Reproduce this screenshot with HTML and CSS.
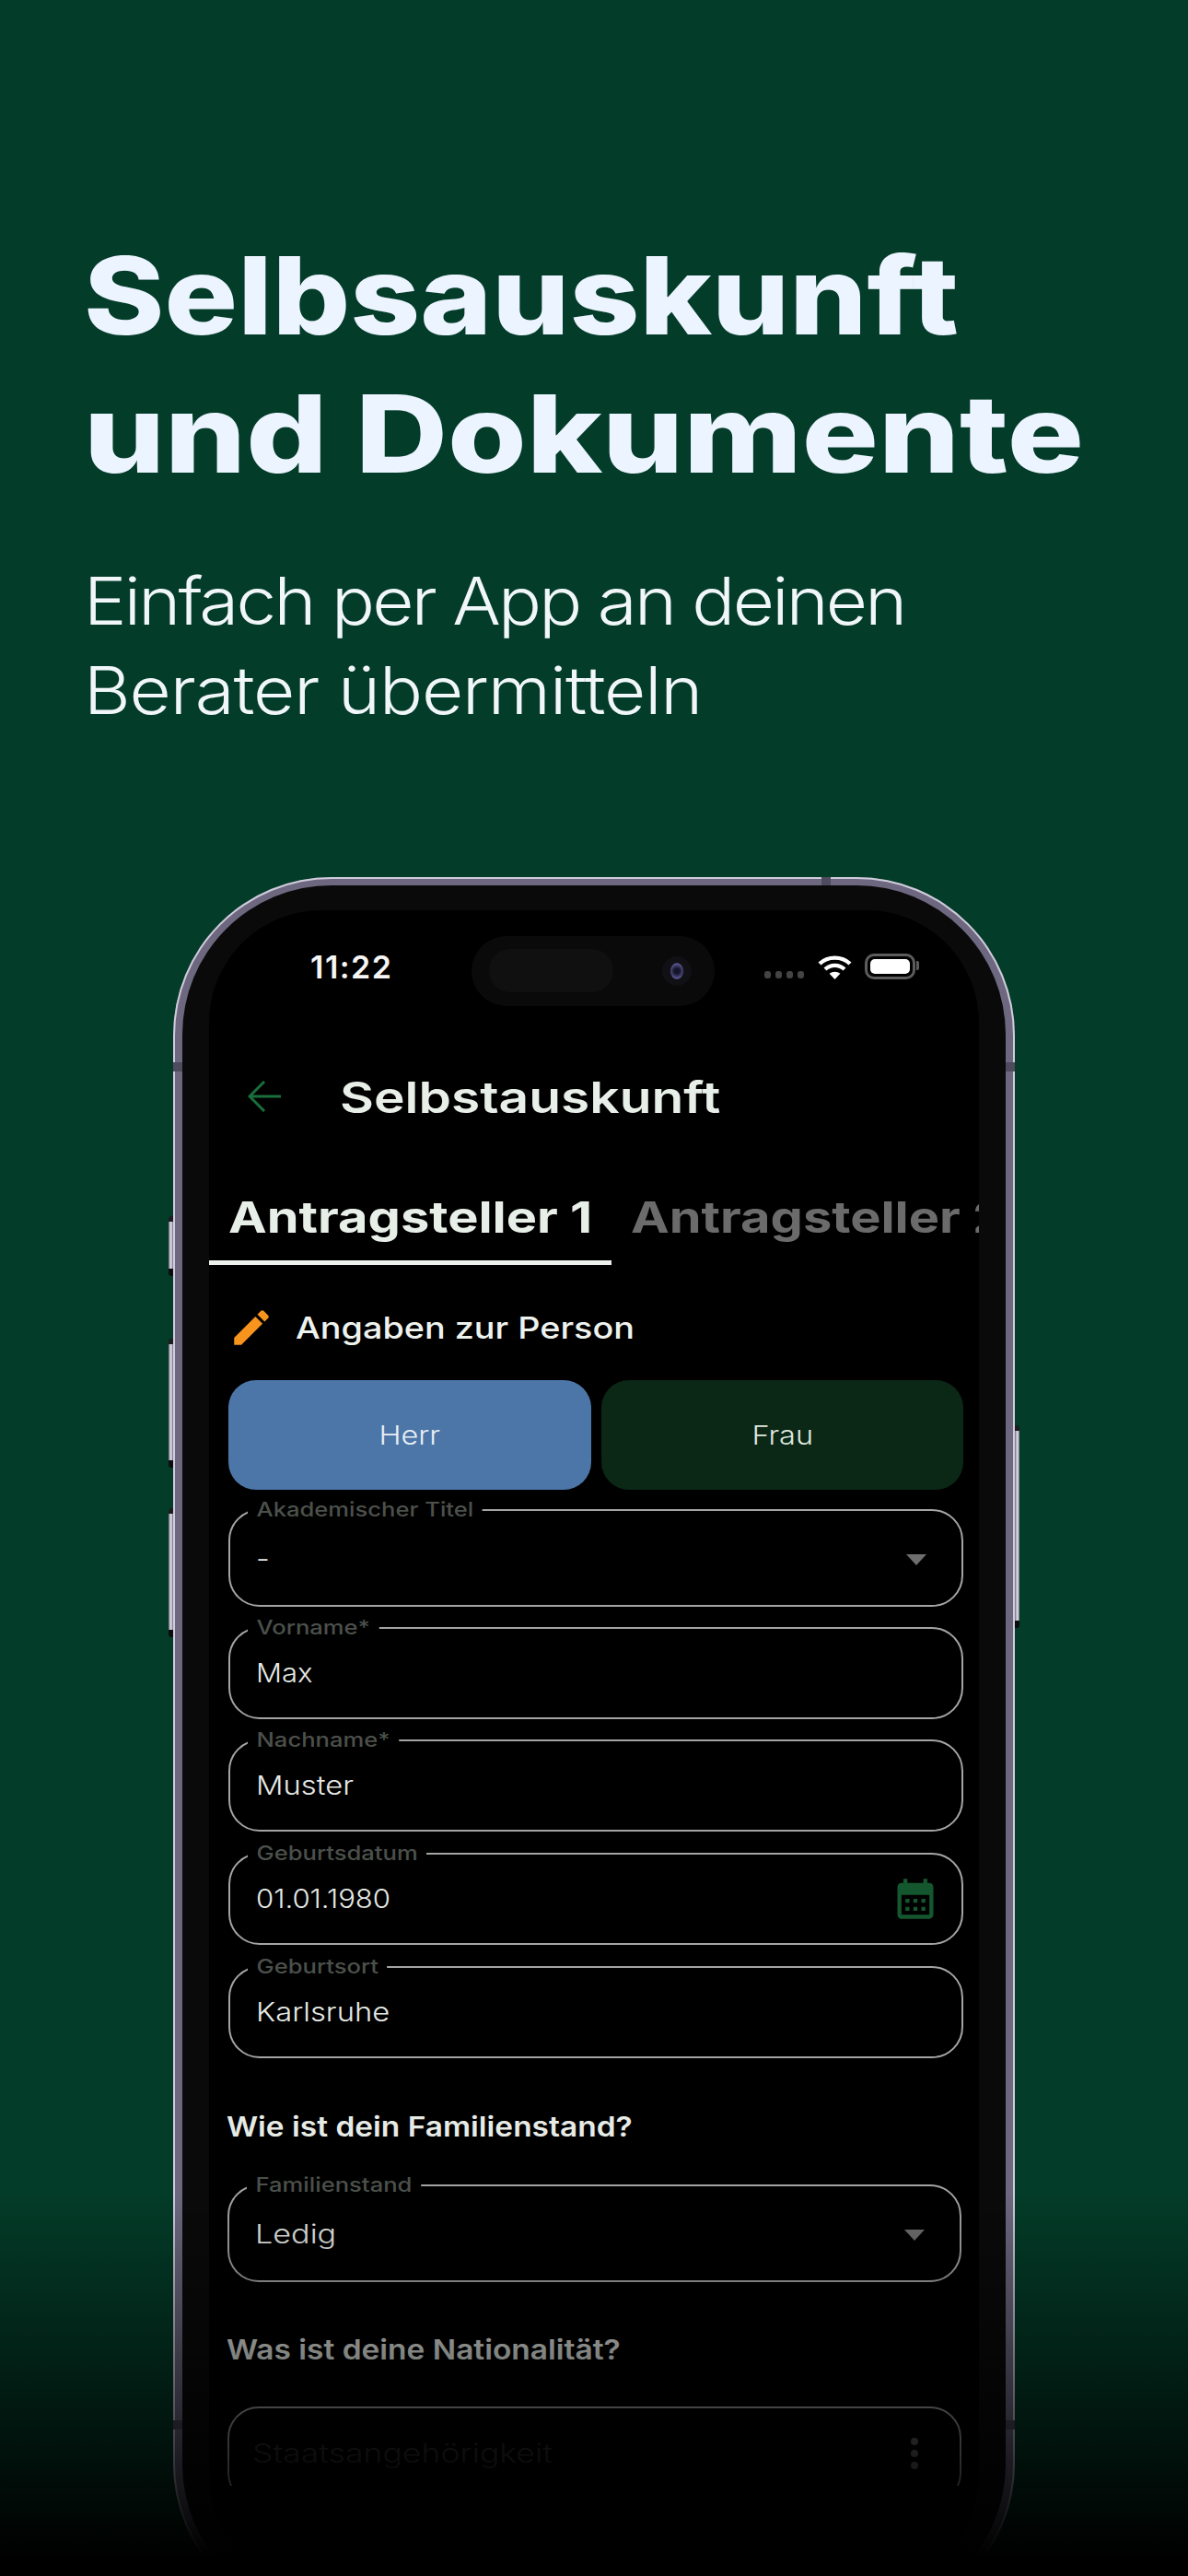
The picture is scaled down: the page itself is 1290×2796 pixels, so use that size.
FILE: index.html
```html
<!DOCTYPE html>
<html lang="de">
<head>
<meta charset="utf-8">
<title>Selbstauskunft und Dokumente</title>
<link rel="stylesheet" href="styles.css">
</head>
<body>
<main class="page">
  <header class="hero">
    <h1 class="hero-title"><span class="line t1">Selbsauskunft</span><br><span class="line t2">und Dokumente</span></h1>
    <p class="hero-sub"><span class="line s1">Einfach per App an deinen</span><br><span class="line s2">Berater übermitteln</span></p>
  </header>

  <div class="phone">
    <span class="hw btn-silent"></span>
    <span class="hw btn-up"></span>
    <span class="hw btn-down"></span>
    <span class="hw btn-power"></span>
    <span class="band band-lt"></span>
    <span class="band band-rt"></span>
    <span class="band band-lb"></span>
    <span class="band band-rb"></span>
    <span class="band band-top"></span>
    <div class="bezel">
      <div class="screen">
        <div class="island">
          <span class="island-pill"></span>
          <span class="camera"><span class="lens"></span></span>
        </div>
        <div class="status">
          <span class="time">11:22</span>
          <div class="status-icons">
            <span class="signal"><i></i><i></i><i></i><i></i></span>
            <svg class="wifi" viewBox="0 0 37 27" aria-hidden="true">
              <path d="M2 10C11 1.5 26 1.5 35 10" fill="none" stroke="#fff" stroke-width="4.4"/>
              <path d="M8 16C14 10.5 23 10.5 29 16" fill="none" stroke="#fff" stroke-width="4.4"/>
              <path d="M18.5 27L12.6 20.8C16 18 21 18 24.4 20.8Z" fill="#fff"/>
            </svg>
            <span class="battery"><span class="battery-fill"></span></span>
          </div>
        </div>

        <div class="appbar">
          <svg class="back" viewBox="0 0 36 34" aria-hidden="true">
            <path d="M36 17H3M18 1L2 17L18 33" fill="none" stroke="#1a6e3c" stroke-width="3"/>
          </svg>
          <span class="appbar-title">Selbstauskunft</span>
        </div>

        <div class="tabs">
          <div class="tab tab-active"><span class="tab-text">Antragsteller 1</span></div>
          <div class="tab tab-idle"><span class="tab-text">Antragsteller 2</span></div>
        </div>

        <div class="scroll">
          <div class="section-head">
            <svg class="pencil" viewBox="0 0 24 24" aria-hidden="true">
              <path fill="#f7941d" d="M3 17.25V21h3.75L17.81 9.94l-3.75-3.75L3 17.25zM20.71 7.04c.39-.39.39-1.02 0-1.41l-2.34-2.34c-.39-.39-1.02-.39-1.41 0l-1.83 1.83 3.75 3.75 1.83-1.83z"/>
            </svg>
            <span class="section-title">Angaben zur Person</span>
          </div>

          <div class="gender">
            <div class="gender-btn gender-on"><span class="gender-text">Herr</span></div>
            <div class="gender-btn gender-off"><span class="gender-text">Frau</span></div>
          </div>

          <div class="fields">
            <div class="field field-tall field-first">
              <span class="label">Akademischer Titel</span>
              <span class="value">-</span>
              <svg class="caret" viewBox="0 0 22 12" aria-hidden="true"><path d="M0 0H22L11 12Z" fill="#6e6e6e"/></svg>
            </div>
            <div class="field">
              <span class="label">Vorname*</span>
              <span class="value v-narrow">Max</span>
            </div>
            <div class="field">
              <span class="label">Nachname*</span>
              <span class="value">Muster</span>
            </div>
            <div class="field">
              <span class="label">Geburtsdatum</span>
              <span class="value v-narrow">01.01.1980</span>
              <svg class="calendar" viewBox="0 0 24 24" aria-hidden="true">
                <path fill="#14572f" d="M19 4h-1V2h-2v2H8V2H6v2H5c-1.11 0-1.99.9-1.99 2L3 20a2 2 0 0 0 2 2h14c1.1 0 2-.9 2-2V6c0-1.1-.9-2-2-2zm0 16H5V10h14v10zM9 14H7v-2h2v2zm4 0h-2v-2h2v2zm4 0h-2v-2h2v2zm-8 4H7v-2h2v2zm4 0h-2v-2h2v2zm4 0h-2v-2h2v2z"/>
              </svg>
            </div>
            <div class="field">
              <span class="label">Geburtsort</span>
              <span class="value">Karlsruhe</span>
            </div>
          </div>

          <h2 class="question question-first"><span class="q-text">Wie ist dein Familienstand?</span></h2>
          <div class="field field-tall field-single">
            <span class="label">Familienstand</span>
            <span class="value v-wide">Ledig</span>
            <svg class="caret" viewBox="0 0 22 12" aria-hidden="true"><path d="M0 0H22L11 12Z" fill="#6e6e6e"/></svg>
          </div>

          <h2 class="question question-second"><span class="q-text">Was ist deine Nationalität?</span></h2>
          <div class="field field-single field-empty">
            <span class="value placeholder">Staatsangehörigkeit</span>
            <span class="kebab"><i></i><i></i><i></i></span>
          </div>
        </div>
        <span class="home"></span>
      </div>
    </div>
  </div>
  <div class="fade"></div>
</main>
</body>
</html>
```

FILE: styles.css
```css
* { box-sizing: border-box; }
html, body { margin: 0; padding: 0; background: #033c28; }
body { font-family: "Inter", "Liberation Sans", sans-serif; }

.page {
  position: relative;
  width: 1290px;
  height: 2796px;
  overflow: hidden;
  background: #033c28;
}

/* Hero */
.hero { padding: 246px 0 0 91px; color: #ecf4ff; }
.hero-title {
  margin: 0;
  font-size: 117px;
  line-height: 150px;
  font-weight: 800;
  white-space: nowrap;
}
.line { display: inline-block; transform-origin: left center; }
.t1 { transform: scaleX(1.133); }
.t2 { transform: scaleX(1.185); }
.hero-sub {
  margin: 58px 0 0;
  font-size: 71px;
  line-height: 97px;
  font-weight: 300;
  white-space: nowrap;
  color: #f1f6f9;
}
.s1 { letter-spacing: -2.5px; transform: scaleX(1.1); }
.s2 { letter-spacing: -1px; transform: scaleX(1.1); }

/* Phone hardware */
.phone {
  position: relative;
  width: 914px;
  height: 1894px;
  margin: 154px 0 0 188px;
  padding: 9px 10px;
  border-radius: 172px;
  background: #6d6880;
  box-shadow: inset 0 0 0 2px #cfccdb;
}
.hw {
  position: absolute;
  width: 5px;
  background:
    linear-gradient(#1c1c20 0 6px, transparent 6px calc(100% - 8px), #0c0c0e calc(100% - 8px)),
    linear-gradient(90deg, #6f6b80, #e6e4ee 55%, #6f6b80);
}
.btn-silent { left: -5px; top: 368px; height: 65px; border-radius: 3px 0 0 3px; }
.btn-up { left: -5px; top: 501px; height: 140px; border-radius: 3px 0 0 3px; }
.btn-down { left: -5px; top: 685px; height: 140px; border-radius: 3px 0 0 3px; }
.btn-power { right: -5px; top: 595px; height: 220px; border-radius: 0 3px 3px 0; }
.band { position: absolute; background: #4f4b5e; }
.band-lt { left: 0; top: 201px; width: 10px; height: 10px; }
.band-rt { right: 0; top: 201px; width: 10px; height: 10px; }
.band-lb { left: 0; top: 1675px; width: 10px; height: 10px; }
.band-rb { right: 0; top: 1675px; width: 10px; height: 10px; }
.band-top { left: 704px; top: 0; width: 10px; height: 9px; }

.bezel {
  height: 100%;
  padding: 27px 29px;
  border-radius: 162px;
  background: #0a0a0a;
}
.screen {
  position: relative;
  height: 100%;
  overflow: hidden;
  border-radius: 122px;
  background: #000;
}

/* Status bar */
.island {
  position: absolute;
  left: 285px;
  top: 28px;
  width: 264px;
  height: 76px;
  border-radius: 38px;
  background: #0a0a0a;
}
.island-pill {
  position: absolute;
  left: 19px;
  top: 14px;
  width: 135px;
  height: 47px;
  border-radius: 24px;
  background: #101010;
}
.camera {
  position: absolute;
  left: 207px;
  top: 22px;
  width: 32px;
  height: 32px;
  border-radius: 50%;
  background: #101015;
  display: flex;
  align-items: center;
  justify-content: center;
}
.lens {
  width: 14px;
  height: 18px;
  border-radius: 50%;
  background: radial-gradient(circle, #15152a 25%, #5b5590 70%, #1a1a2a 100%);
}
.status {
  position: relative;
  display: flex;
  align-items: center;
  justify-content: space-between;
  height: 66px;
  margin-top: 28px;
  padding: 0 69px 0 110px;
}
.time {
  font-family: "Inter", sans-serif;
  font-size: 34px;
  font-weight: 600;
  letter-spacing: 1.5px;
  color: #f5f5f5;
}
.status-icons { display: flex; align-items: center; }
.signal { display: flex; gap: 5px; margin: 18px 15px 0 0; }
.signal i { width: 7px; height: 8px; border-radius: 3px; background: #444; }
.wifi { width: 37px; height: 27px; margin-right: 14px; }
.battery {
  position: relative;
  width: 55px;
  height: 28px;
  padding: 3px;
  border: 3px solid #5c5c5c;
  border-radius: 10px;
}
.battery::after {
  content: "";
  position: absolute;
  right: -7px;
  top: 5px;
  width: 3px;
  height: 10px;
  border-radius: 0 2px 2px 0;
  background: #5c5c5c;
}
.battery-fill { display: block; height: 100%; border-radius: 5px; background: #fff; }

/* App bar */
.appbar {
  display: flex;
  align-items: center;
  height: 60px;
  margin-top: 78px;
  padding-left: 42px;
}
.back { width: 36px; height: 34px; margin-right: 64px; }
.appbar-title {
  display: inline-block;
  font-size: 47px;
  font-weight: 600;
  color: #e8efe8;
  white-space: nowrap;
  transform: scaleX(1.21);
  transform-origin: left center;
}

/* Tabs */
.tabs {
  display: flex;
  align-items: flex-start;
  height: 103px;
  margin-top: 50px;
  font-size: 47px;
  font-weight: 700;
  white-space: nowrap;
}
.tab {
  flex: none;
  display: flex;
  align-items: center;
  height: 97px;
  padding-top: 3px;
}
.tab-text { display: inline-block; transform: scaleX(1.19); transform-origin: left center; }
.tab-active {
  width: 437px;
  height: 103px;
  padding-left: 21px;
  border-bottom: 5px solid #eef0ee;
  color: #e8efe8;
}
.tab-idle { margin-left: 21px; color: #6b6b6b; }

/* Scroll body */
.scroll {
  height: 1325px;
  overflow: hidden;
  padding: 43px 17px 0 21px;
}
.section-head { display: flex; align-items: center; height: 50px; }
.pencil { width: 50px; height: 50px; margin-right: 23px; }
.section-title {
  display: inline-block;
  font-size: 33px;
  font-weight: 500;
  color: #eef2ee;
  white-space: nowrap;
  transform: scaleX(1.145);
  transform-origin: left center;
}

.gender { display: flex; gap: 11px; margin-top: 32px; }
.gender-btn {
  flex: 1;
  display: flex;
  align-items: center;
  justify-content: center;
  height: 119px;
  border-radius: 30px;
  font-size: 28px;
  font-weight: 300;
}
.gender-text { display: inline-block; transform: scaleX(1.16); }
.gender-on { background: #4c76a8; color: #e8eef5; }
.gender-off { background: #0b2716; color: #dfe8df; }

.fields { display: flex; flex-direction: column; gap: 22.67px; margin-top: 21px; }
.field {
  position: relative;
  display: flex;
  align-items: center;
  justify-content: space-between;
  height: 100px;
  padding: 0 30px 0 28px;
  border: 2.5px solid #a2a5a2;
  border-radius: 34px;
}
.field-tall { height: 106px; padding-top: 2px; }
.field-first { margin-bottom: -1px; }
.field-single { margin-right: 2px; margin-left: -1px; }
.label {
  position: absolute;
  left: 19px;
  top: -16px;
  padding: 0 8px;
  background: #000;
  font-size: 21.5px;
  line-height: 28px;
  font-weight: 500;
  color: #4b504b;
  white-space: nowrap;
  transform: scaleX(1.19);
  transform-origin: left center;
}
.value {
  display: inline-block;
  font-size: 28px;
  font-weight: 300;
  color: #e6eae6;
  white-space: nowrap;
  transform: scaleX(1.17);
  transform-origin: left center;
}
.v-narrow { transform: scaleX(1.11); }
.v-wide { transform: scaleX(1.22); }
.placeholder { color: #2e2e2e; margin-left: -3px; transform: scaleX(1.27); }
.caret { width: 22px; height: 12px; margin: 2px 8px 0 0; }
.calendar { width: 52px; height: 52px; margin: 0 -6px 0 0; }
.kebab { display: flex; flex-direction: column; gap: 5px; margin-right: 15px; }
.kebab i { width: 8px; height: 8px; border-radius: 50%; background: #666; }
.field-empty { height: 106px; padding-bottom: 3px; }

.question { margin: 0; font-size: 30px; line-height: 40px; font-weight: 600; color: #e6ebe6; white-space: nowrap; }
.q-text { display: inline-block; transform: scaleX(1.115); transform-origin: left center; }
.question-first { margin: 54px 0 43px -2px; }
.question-second { margin: 53px 0 42px -2px; }

.home {
  position: absolute;
  left: 268px;
  bottom: 30px;
  width: 300px;
  height: 10px;
  border-radius: 5px;
  background: #222;
}

/* Bottom fade over everything */
.fade {
  position: absolute;
  left: 0;
  right: 0;
  bottom: 0;
  height: 416px;
  background: linear-gradient(rgba(0,0,0,0), #000 95%);
}
```
